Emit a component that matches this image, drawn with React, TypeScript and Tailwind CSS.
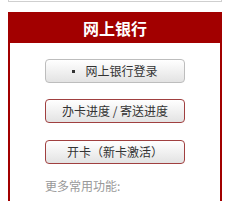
import React from 'react';

const font = { fontFamily: '"Noto Sans CJK SC", "Liberation Sans", sans-serif' };

function PanelButton({ children, red }: { children: React.ReactNode; red?: boolean }) {
  return (
    <button
      className={
        'flex h-[24px] w-[140px] items-center justify-center rounded-[4px] border bg-gradient-to-b from-white to-[#e3e3e3] text-[12px] leading-none text-[#333] ' +
        (red ? 'border-[#a04040]' : 'border-[#bdbdbd]')
      }
    >
      {children}
    </button>
  );
}

export default function App() {
  return (
    <div className="w-[229px] bg-white" style={font}>
      {/* bottom edge of the box above */}
      <div className="ml-[8px] h-[2px] w-[214px] border-x border-b border-[#cfcfcf]" />

      <div className="ml-[8px] mt-[10px] w-[214px]">
        <div className="flex h-[31px] items-center justify-center bg-[#a20000] text-[16px] font-bold text-white">
          网上银行
        </div>
        <div className="flex h-[158px] flex-col items-center border-x-2 border-[#a20000] pt-[16px]">
          <PanelButton>
            <span className="mr-[10px] inline-block h-[3px] w-[3px] bg-[#333]" />
            网上银行登录
          </PanelButton>
          <div className="h-[16px]" />
          <PanelButton red>办卡进度 / 寄送进度</PanelButton>
          <div className="h-[17px]" />
          <PanelButton red>开卡（新卡激活）</PanelButton>
          <div className="mt-[14px] w-[140px] text-[12px] leading-[16px] text-[#999]">更多常用功能:</div>
        </div>
      </div>
    </div>
  );
}
